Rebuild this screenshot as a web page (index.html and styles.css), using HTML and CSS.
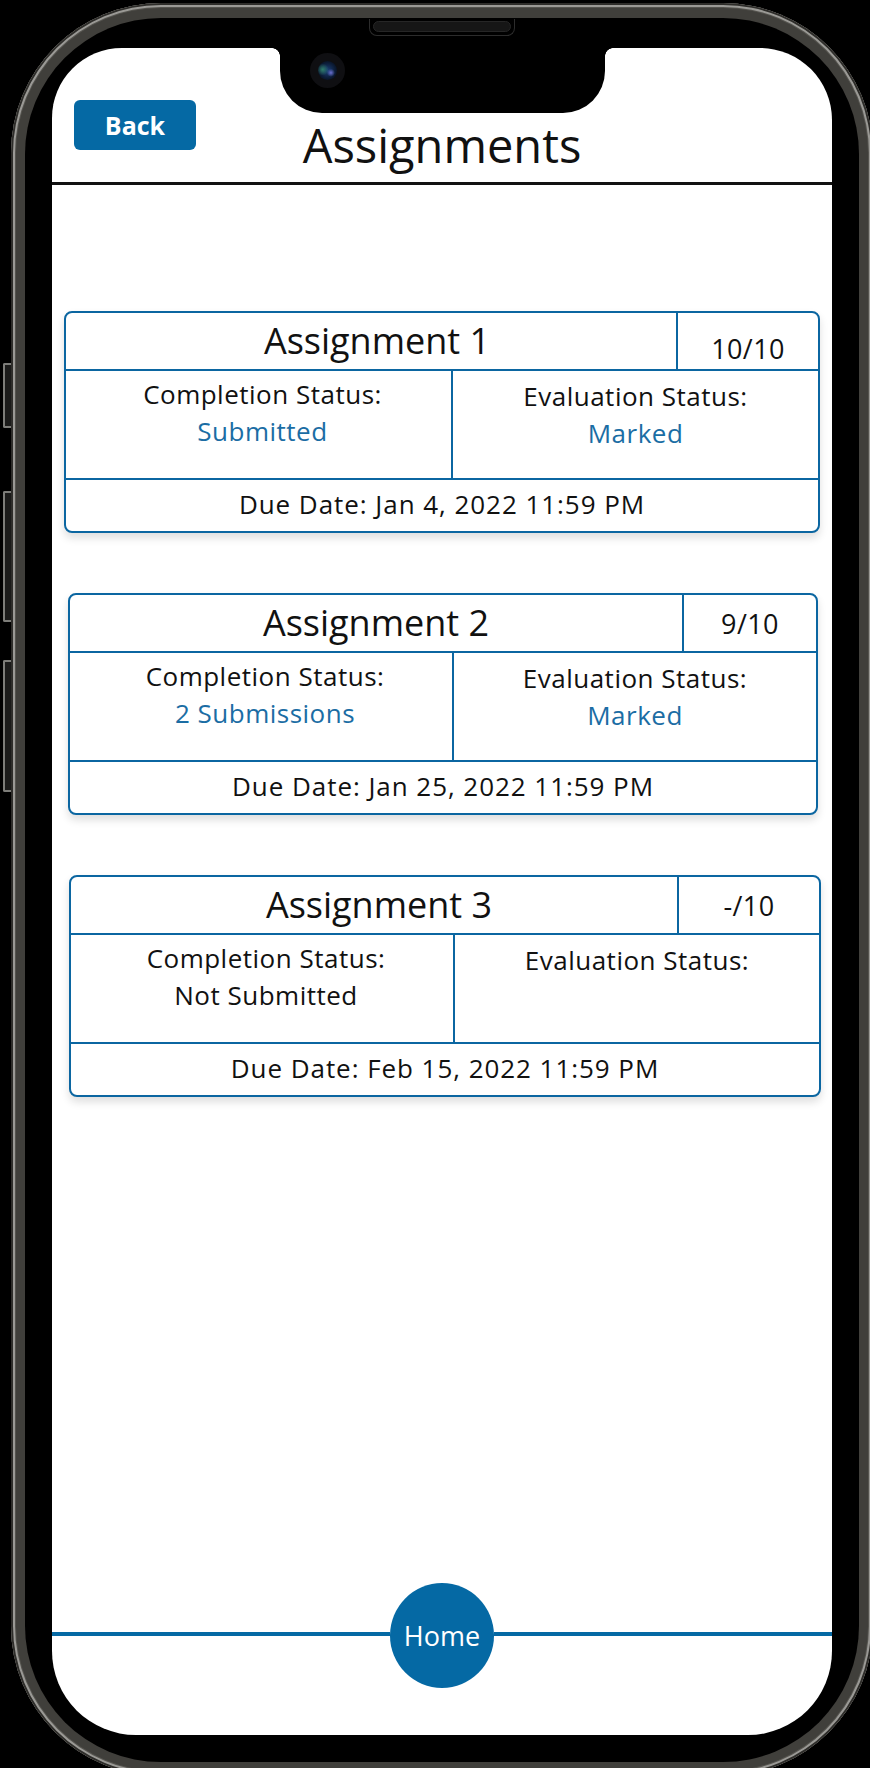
FILE: index.html
```html
<!DOCTYPE html>
<html lang="en">
<head>
<meta charset="utf-8">
<title>Assignments</title>
<link rel="stylesheet" href="styles.css">
</head>
<body>
<div class="device">
  <div class="side-keys">
    <span class="key key--mute"></span>
    <span class="key key--up"></span>
    <span class="key key--down"></span>
  </div>
  <div class="phone">
    <div class="bezel">
      <div class="speaker"><span class="speaker-grill"></span></div>
      <div class="screen">
        <div class="notch"><span class="camera"><span class="lens"></span></span></div>
        <header class="app-header">
          <button class="back-btn" type="button">Back</button>
          <h1 class="page-title">Assignments</h1>
        </header>
        <main class="assignment-list">
          <section class="card card--one">
            <div class="card-head">
              <h2 class="card-title">Assignment 1</h2>
              <div class="card-score card-score--low">10/10</div>
            </div>
            <div class="card-body">
              <div class="status">
                <p class="status-label">Completion Status:</p>
                <p class="status-value">Submitted</p>
              </div>
              <div class="status status--eval">
                <p class="status-label">Evaluation Status:</p>
                <p class="status-value">Marked</p>
              </div>
            </div>
            <div class="card-due">Due Date: Jan 4, 2022 11:59 PM</div>
          </section>
          <section class="card card--two">
            <div class="card-head">
              <h2 class="card-title">Assignment 2</h2>
              <div class="card-score">9/10</div>
            </div>
            <div class="card-body">
              <div class="status">
                <p class="status-label">Completion Status:</p>
                <p class="status-value">2 Submissions</p>
              </div>
              <div class="status status--eval">
                <p class="status-label">Evaluation Status:</p>
                <p class="status-value">Marked</p>
              </div>
            </div>
            <div class="card-due">Due Date: Jan 25, 2022 11:59 PM</div>
          </section>
          <section class="card card--three">
            <div class="card-head">
              <h2 class="card-title">Assignment 3</h2>
              <div class="card-score">-/10</div>
            </div>
            <div class="card-body">
              <div class="status">
                <p class="status-label">Completion Status:</p>
                <p class="status-value status-value--plain">Not Submitted</p>
              </div>
              <div class="status status--eval">
                <p class="status-label">Evaluation Status:</p>
              </div>
            </div>
            <div class="card-due">Due Date: Feb 15, 2022 11:59 PM</div>
          </section>
        </main>
        <footer class="bottom-nav">
          <span class="nav-line"></span>
          <button class="home-btn" type="button">Home</button>
          <span class="nav-line"></span>
        </footer>
      </div>
    </div>
  </div>
</div>
</body>
</html>
```
FILE: styles.css
```css
* { box-sizing: border-box; }

html, body {
  margin: 0;
  padding: 0;
  background: #000;
}

body {
  font-family: "Open Sans", "Noto Sans", sans-serif;
  color: #111;
}

.device {
  width: 870px;
  height: 1768px;
  overflow: hidden;
  background: #000;
  display: flex;
  align-items: flex-start;
}

/* side hardware keys */
.side-keys {
  width: 11px;
  flex-shrink: 0;
  display: flex;
  flex-direction: column;
  padding-top: 363px;
  padding-left: 3px;
}

.key {
  display: block;
  width: 8px;
  border: 2px solid #7d7d79;
  border-right: none;
  border-radius: 2px 0 0 2px;
  background: #1b1b1a;
}

.key--mute { height: 65px; }
.key--up { height: 131px; margin-top: 63px; }
.key--down { height: 132px; margin-top: 38px; }

/* phone body */
.phone {
  flex-shrink: 0;
  width: 862px;
  height: 1773px;
  margin-top: 3px;
  padding: 15px 14px 14px 14px;
  border-radius: 150px;
  background: #403f3b;
  box-shadow: inset 0 0 0 2px #2e2d2a, inset 0 0 0 4px #9a9995, inset 0 0 0 5px #55544f;
}

.bezel {
  height: 100%;
  background: #000;
  border-radius: 136px;
  padding: 1px 27px 27px 27px;
  display: flex;
  flex-direction: column;
}

.speaker {
  width: 146px;
  height: 17px;
  margin: 0 auto 12px auto;
  border: 1px solid #2c2c2c;
  border-top: none;
  border-radius: 0 0 8px 8px;
  padding: 2px 3px 3px;
  display: flex;
}

.speaker-grill {
  flex: 1;
  border-radius: 6px;
  background: #161616;
  border: 1px solid #262626;
}

.screen {
  position: relative;
  flex: 1;
  background: #fff;
  border-radius: 70px 72px 84px 84px;
  overflow: hidden;
  display: flex;
  flex-direction: column;
}

.notch {
  position: absolute;
  top: 0;
  left: 228px;
  width: 325px;
  height: 65px;
  background: #000;
  border-radius: 0 0 42px 42px;
}

.notch::before,
.notch::after {
  content: "";
  position: absolute;
  top: 0;
  width: 8px;
  height: 8px;
}

.notch::before {
  left: -8px;
  background: radial-gradient(circle at 0 100%, transparent 7.5px, #000 8px);
}

.notch::after {
  right: -8px;
  background: radial-gradient(circle at 100% 100%, transparent 7.5px, #000 8px);
}

.camera {
  position: absolute;
  left: 30px;
  top: 5px;
  width: 35px;
  height: 35px;
  border-radius: 50%;
  background: #0f0f12;
  display: flex;
  align-items: center;
  justify-content: center;
}

.lens {
  width: 19px;
  height: 19px;
  border-radius: 50%;
  background:
    radial-gradient(circle at 68% 62%, #6a6fd0 0, rgba(80, 90, 200, 0) 4px),
    radial-gradient(circle at 25% 45%, #2f7d6a 0, rgba(40, 110, 90, 0) 6px),
    radial-gradient(circle at 50% 50%, #1b3f78 0, #0b1a33 60%, #05070c 100%);
}

/* header */
.app-header {
  height: 137px;
  flex-shrink: 0;
  padding: 52px 22px 0 22px;
  border-bottom: 3px solid #111;
  display: grid;
  grid-template-columns: 1fr auto 1fr;
  align-items: start;
}

.back-btn {
  grid-column: 1;
  justify-self: start;
  width: 122px;
  height: 50px;
  padding: 0;
  border: none;
  border-radius: 6px;
  background: #0569a4;
  color: #fff;
  font-family: "Open Sans", "Noto Sans", sans-serif;
  font-weight: 700;
  font-size: 25px;
  display: flex;
  align-items: center;
  justify-content: center;
}

.page-title {
  grid-column: 2;
  margin: 22px 0 0 0;
  font-size: 47px;
  line-height: 1;
  font-weight: 400;
  color: #111;
}

/* list */
.assignment-list {
  flex: 1;
  padding-top: 126px;
  display: flex;
  flex-direction: column;
  gap: 60px;
}

.card {
  --w: 756px;
  --x: 12px;
  --score: 142px;
  --left: 387px;
  --shift: 12px;
  width: var(--w);
  margin-left: var(--x);
  border: 2px solid #0b66a1;
  border-radius: 8px;
  background: #fff;
  box-shadow: 0 5px 9px rgba(0, 0, 0, 0.13);
  display: flex;
  flex-direction: column;
}

.card--two { --w: 750px; --x: 16px; --score: 134px; --left: 384px; --shift: 0px; }
.card--three { --w: 752px; --x: 17px; --score: 142px; --left: 384px; --shift: 10px; }

.card-head {
  height: 58px;
  border-bottom: 2px solid #0b66a1;
  display: flex;
}

.card-title {
  flex: 1;
  margin: 0;
  padding-left: var(--shift);
  align-self: center;
  text-align: center;
  font-size: 36px;
  font-weight: 400;
  line-height: 1.2;
  color: #111;
}

.card-score {
  width: var(--score);
  border-left: 2px solid #0b66a1;
  display: flex;
  align-items: center;
  justify-content: center;
  font-size: 27px;
  letter-spacing: 0.4px;
  color: #111;
}

.card-score--low { padding-top: 14px; }

.card-body {
  height: 109px;
  border-bottom: 2px solid #0b66a1;
  display: grid;
  grid-template-columns: var(--left) 1fr;
}

.status {
  padding-top: 5px;
  padding-left: 8px;
  text-align: center;
  border-right: 2px solid #0b66a1;
}

.status--eval {
  padding-top: 7px;
  padding-left: 0;
  border-right: none;
}

.status-label,
.status-value {
  margin: 0;
  font-size: 26px;
  line-height: 37px;
  letter-spacing: 0.5px;
}

.status-label { color: #111; }
.status-value { color: #1b6da4; }
.status-value--plain { color: #111; }

.card-due {
  height: 51px;
  padding-bottom: 3px;
  display: flex;
  align-items: center;
  justify-content: center;
  font-size: 26px;
  letter-spacing: 0.95px;
  color: #111;
}

/* bottom nav */
.bottom-nav {
  height: 152px;
  flex-shrink: 0;
  display: flex;
  align-items: flex-start;
}

.nav-line {
  flex: 1;
  height: 4px;
  margin-top: 49px;
  background: #0569a4;
}

.home-btn {
  width: 104px;
  height: 105px;
  padding: 0;
  border: none;
  border-radius: 50%;
  background: #0569a4;
  color: #fff;
  font-family: "Open Sans", "Noto Sans", sans-serif;
  font-size: 27px;
  display: flex;
  align-items: center;
  justify-content: center;
}
```
